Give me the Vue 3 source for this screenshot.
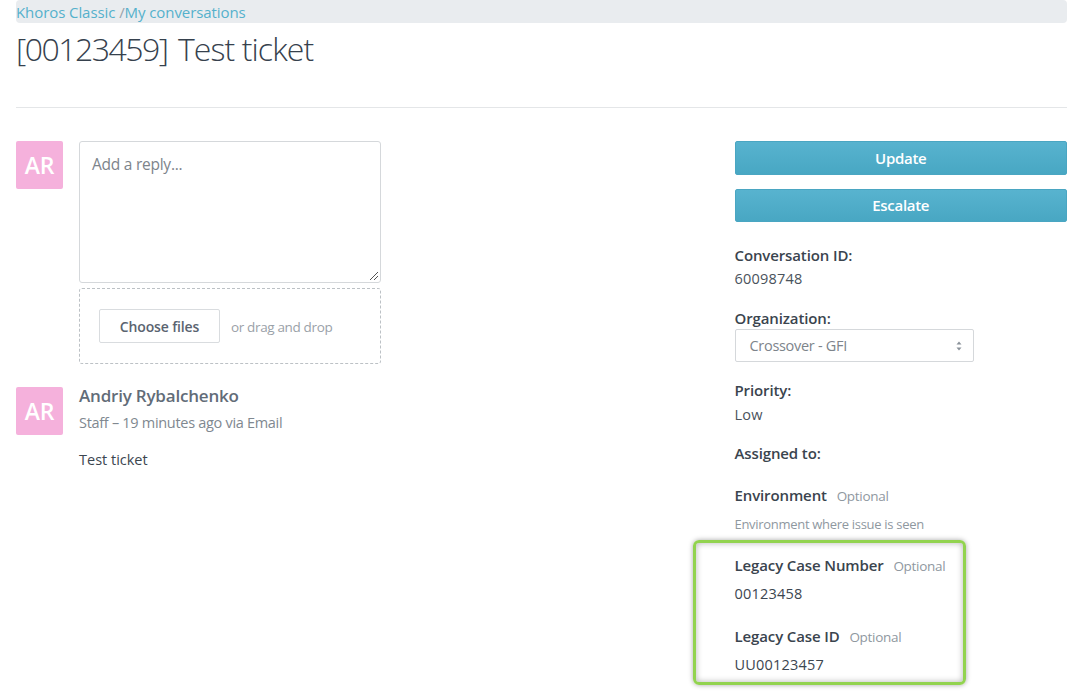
<script setup>
const avatar = 'AR'
</script>

<template>
  <div class="page">
    <nav class="crumbs"><a>Khoros Classic</a> <span class="sep">/</span><a>My conversations</a></nav>
    <h1 class="title"><span class="num">[00123459]</span> Test ticket</h1>
    <hr class="rule" />
    <div class="main">
      <section class="left">
        <div class="row">
          <div class="avatar">{{ avatar }}</div>
          <div class="composer">
            <div class="textarea">
              Add a reply...
              <svg class="grip" width="10" height="10" viewBox="0 0 10 10"><path d="M1 9 9 1M5 9 9 5" stroke="#555" stroke-width="1" fill="none" /></svg>
            </div>
            <div class="drop">
              <button class="choose">Choose files</button>
              <span class="dragtext">or drag and drop</span>
            </div>
          </div>
        </div>
        <div class="row message">
          <div class="avatar">{{ avatar }}</div>
          <div>
            <div class="author">Andriy Rybalchenko</div>
            <div class="meta">Staff – 19 minutes ago via Email</div>
            <p class="body">Test ticket</p>
          </div>
        </div>
      </section>
      <aside class="side">
        <button class="btn">Update</button>
        <button class="btn second">Escalate</button>
        <div class="label first">Conversation ID:</div>
        <div class="value">60098748</div>
        <div class="label org">Organization:</div>
        <div class="select">
          <span>Crossover - GFI</span>
          <svg width="8" height="12" viewBox="0 0 8 12"><path d="M4 1.5 6.5 4.5h-5zM4 10.5 1.5 7.5h5z" fill="#8a9299" /></svg>
        </div>
        <div class="label prio">Priority:</div>
        <div class="value low">Low</div>
        <div class="label assigned">Assigned to:</div>
        <div class="label env">Environment <small>Optional</small></div>
        <div class="hint">Environment where issue is seen</div>
        <div class="legacy">
          <div class="label">Legacy Case Number <small>Optional</small></div>
          <div class="value v2">00123458</div>
          <div class="label l2">Legacy Case ID <small>Optional</small></div>
          <div class="value v2">UU00123457</div>
          <div class="highlight"></div>
        </div>
      </aside>
    </div>
  </div>
</template>

<style scoped>
.page {
  box-sizing: border-box;
  width: 1084px;
  height: 698px;
  padding: 0 17px 0 16px;
  overflow: hidden;
  background: #fff;
  font-family: "Open Sans", "Noto Sans", sans-serif;
  font-size: 14.5px;
  letter-spacing: -0.3px;
  color: #3c4650;
}
.crumbs {
  height: 23px;
  line-height: 25px;
  border-radius: 4px;
  background: #e9ecef;
  font-size: 15px;
  letter-spacing: -0.08px;
  color: #55b1cc;
}
.sep { color: #98a2aa; }
.title {
  margin: 5px 0 0;
  font-size: 32px;
  line-height: 42px;
  font-weight: 300;
  letter-spacing: -0.9px;
  color: #36414d;
}
.num { letter-spacing: -1.5px; margin-right: 3px; }
.rule {
  margin: 37px 0 33px;
  border: 0;
  border-top: 1px solid #e4e6e8;
}
.main { display: flex; justify-content: space-between; }
.left { width: 365px; }
.row { display: flex; gap: 16px; }
.avatar {
  flex: none;
  width: 47px;
  height: 48px;
  border-radius: 2px;
  background: #f5b1dc;
  color: #fff;
  font-size: 23px;
  font-weight: 600;
  line-height: 49px;
  text-align: center;
}
.composer { width: 302px; }
.textarea {
  position: relative;
  box-sizing: border-box;
  height: 142px;
  padding: 10px 12px;
  border: 1px solid #d5d8db;
  border-radius: 3px;
  font-size: 15.5px;
  letter-spacing: -0.25px;
  color: #7d848b;
  line-height: 24px;
}
.grip { position: absolute; right: 1px; bottom: 1px; }
.drop {
  box-sizing: border-box;
  display: flex;
  align-items: center;
  gap: 11px;
  height: 76px;
  margin-top: 5px;
  padding-left: 19px;
  border: 1px dashed #bcc1c5;
  border-radius: 3px;
}
.choose {
  width: 121px;
  height: 34px;
  padding: 0;
  border: 1px solid #d9dcdf;
  border-radius: 2px;
  background: #fff;
  font: 600 14px "Open Sans", sans-serif;
  letter-spacing: -0.15px;
  color: #5a6470;
}
.dragtext { font-size: 13.5px; color: #9aa1a8; margin-top: 2px; letter-spacing: -0.35px; }
.message { margin-top: 23px; }
.author { font-size: 17px; font-weight: 600; color: #626c78; line-height: 20px; margin-top: -1px; letter-spacing: -0.2px; }
.meta { margin-top: 8px; font-size: 14.5px; letter-spacing: -0.3px; color: #808890; line-height: 18px; }
.body { margin: 18px 0 0; font-size: 14.5px; letter-spacing: 0; line-height: 20px; color: #3c4650; }
.side { width: 332.5px; flex: none; }
.btn {
  display: block;
  width: 100%;
  height: 34px;
  padding: 0;
  border: 1px solid #4aa6c2;
  border-radius: 2px;
  background: linear-gradient(#58b3cf, #48a7c3);
  color: #fff;
  font: 600 15px "Open Sans", sans-serif;
  letter-spacing: -0.3px;
}
.second { margin-top: 14px; height: 33px; padding-bottom: 2px; }
.label { font-size: 15px; font-weight: 600; line-height: 20px; letter-spacing: -0.12px; color: #3a444e; }
.label small {
  margin-left: 6px;
  font-size: 13.5px;
  font-weight: 400;
  letter-spacing: -0.3px;
  color: #8f989f;
}
.first { margin-top: 23px; }
.value { margin-top: 4px; line-height: 20px; letter-spacing: 0.2px; color: #4a535c; }
.org { margin-top: 19px; }
.select {
  box-sizing: border-box;
  display: flex;
  align-items: center;
  justify-content: space-between;
  width: 239px;
  height: 33px;
  margin-top: 1px;
  padding: 0 10px 0 14px;
  border: 1px solid #d5d8db;
  border-radius: 2px;
  background: #fff;
  color: #7d848b;
}
.prio { margin-top: 18px; }
.low { margin-top: 5px; }
.assigned { margin-top: 18px; }
.env { margin-top: 22px; }
.hint { margin-top: 9px; font-size: 13px; line-height: 18px; color: #8f989f; }
.legacy { position: relative; margin-top: 22px; }
.v2 { margin-top: 8px; color: #3c4650; }
.l2 { margin-top: 22px; }
.highlight {
  position: absolute;
  left: -41.5px;
  top: -15px;
  width: 266.5px;
  height: 139px;
  border: 3px solid #92d34f;
  border-radius: 6px;
  box-shadow: 0 0 5px rgba(0, 0, 0, .35), inset 0 0 6px rgba(0, 0, 0, .3);
}
</style>
